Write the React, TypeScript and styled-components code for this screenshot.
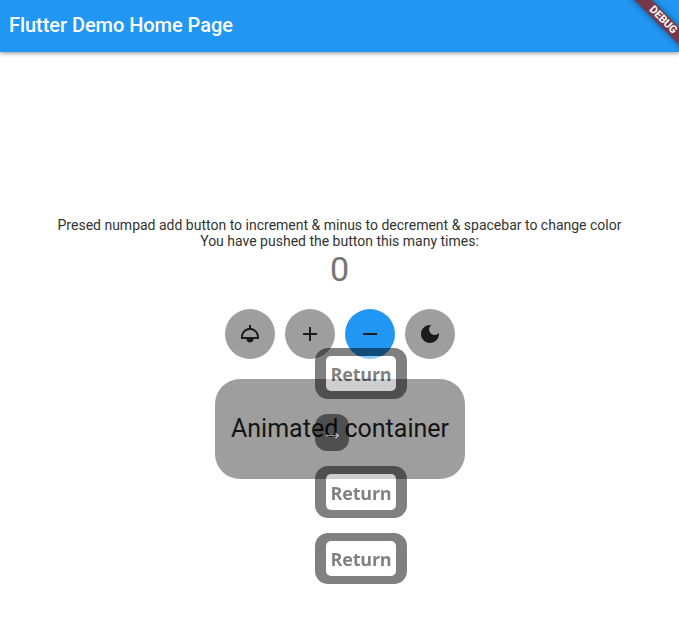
import React from 'react';
import styled, { createGlobalStyle } from 'styled-components';

const GlobalStyle = createGlobalStyle`
  * { box-sizing: border-box; }
  body { margin: 0; background: #fff; font-family: Roboto, sans-serif; overflow: hidden; }
`;

const Page = styled.div`
  position: relative;
  display: flex;
  flex-direction: column;
  width: 679px;
  height: 637px;
  overflow: hidden;
  background: #fff;
`;

const AppBar = styled.header`
  display: flex;
  align-items: center;
  flex: 0 0 52px;
  padding: 0 9px 3px;
  background: #2196f3;
  box-shadow: 0 1px 4px rgba(0, 0, 0, 0.35), 0 3px 4px rgba(0, 0, 0, 0.08);
`;

const Title = styled.h1`
  margin: 0;
  color: #fff;
  font-size: 20px;
  font-weight: 500;
  letter-spacing: -0.05px;
  line-height: 24px;
  white-space: nowrap;
`;

const DebugBanner = styled.div`
  position: absolute;
  left: 613px;
  top: 14px;
  width: 100px;
  height: 12px;
  transform: rotate(45deg);
  background: #773848;
  box-shadow: 0 0 6px rgba(0, 0, 0, 0.5);
  color: #fff;
  font-size: 10.8px;
  font-weight: 700;
  line-height: 12px;
  text-align: center;
`;

const Main = styled.main`
  display: flex;
  flex-direction: column;
  align-items: center;
  padding-top: 165px;
`;

const Message = styled.p`
  margin: 0;
  color: #333;
  font-size: 14px;
  line-height: 16px;
  text-align: center;
  white-space: nowrap;
`;

const Count = styled.div`
  height: 40px;
  margin-bottom: 19.5px;
  color: #757575;
  font-size: 34px;
  line-height: 40px;
`;

const ButtonRow = styled.div`
  display: flex;
  gap: 10px;
  margin: 0 0 20px 1px;
`;

const RoundButton = styled.button<{ $active?: boolean }>`
  display: flex;
  align-items: center;
  justify-content: center;
  width: 50px;
  height: 50px;
  padding: 0;
  border: 0;
  border-radius: 50%;
  background: ${(p) => (p.$active ? '#2196f3' : '#9e9e9e')};
  color: #1b1b1b;
`;

const AnimatedBox = styled.div`
  display: flex;
  align-items: center;
  justify-content: center;
  width: 250px;
  height: 100px;
  margin-left: 1px;
  padding-bottom: 1px;
  border-radius: 25px;
  background: #9e9e9e;
  color: #141414;
  font-size: 25px;
  white-space: nowrap;
`;

const KeyOverlay = styled.div`
  position: absolute;
  left: 315px;
  top: 348px;
  display: flex;
  flex-direction: column;
  align-items: flex-start;
  gap: 15px;
  opacity: 0.5;
`;

const KeyFrame = styled.div<{ $height: number }>`
  width: 92px;
  height: ${(p) => p.$height}px;
  padding: 8px 11px;
  border-radius: 13px;
  background: #000;
`;

const KeyFace = styled.div`
  display: flex;
  align-items: center;
  justify-content: center;
  width: 70px;
  height: 100%;
  padding-top: 1px;
  border-radius: 5px;
  background: #fff;
  color: #000;
  font: 700 18px/24px 'Open Sans', sans-serif;
  letter-spacing: -0.2px;
`;

const ArrowKey = styled.div`
  display: flex;
  align-items: center;
  justify-content: center;
  width: 34px;
  height: 37px;
  padding-top: 5px;
  border-radius: 12px;
  background: #000;
`;

const icon = { width: 24, height: 24, viewBox: '0 0 24 24', fill: 'currentColor' };

const LampIcon = () => (
  <svg {...icon}>
    <path d="M13 6.06V3h-2v3.06C6.5 6.56 3 10.38 3 15v2h5.4c0 1.99 1.61 3.6 3.6 3.6s3.6-1.61 3.6-3.6H21v-2c0-4.62-3.5-8.44-8-8.94zM12 15H5c0-3.86 3.14-7 7-7s7 3.14 7 7h-7z" />
  </svg>
);
const AddIcon = () => (
  <svg {...icon}>
    <path d="M19 13h-6v6h-2v-6H5v-2h6V5h2v6h6v2z" />
  </svg>
);
const RemoveIcon = () => (
  <svg {...icon}>
    <path d="M19 13H5v-2h14v2z" />
  </svg>
);
const MoonIcon = () => (
  <svg {...icon}>
    <path d="M12 3c-4.97 0-9 4.03-9 9s4.03 9 9 9 9-4.03 9-9c0-.46-.04-.92-.1-1.36-.98 1.37-2.58 2.26-4.4 2.26-2.98 0-5.4-2.42-5.4-5.4 0-1.81.89-3.42 2.26-4.4-.44-.06-.9-.1-1.36-.1z" />
  </svg>
);
const ArrowIcon = () => (
  <svg width="14" height="8" viewBox="0 0 14 8" fill="none" stroke="#fff">
    <path d="M1 4.5h12.5" strokeWidth="1.2" />
    <path d="M10.5 2l2.5 2.5-2.5 2.5" strokeWidth="1.4" />
  </svg>
);

const ReturnKey = ({ height = 51 }: { height?: number }) => (
  <KeyFrame $height={height}>
    <KeyFace>Return</KeyFace>
  </KeyFrame>
);

export default function App() {
  return (
    <Page>
      <GlobalStyle />
      <AppBar>
        <Title>Flutter Demo Home Page</Title>
      </AppBar>
      <DebugBanner>DEBUG</DebugBanner>
      <Main>
        <Message>
          Presed numpad add button to increment &amp; minus to decrement &amp; spacebar to change color
        </Message>
        <Message>You have pushed the button this many times:</Message>
        <Count>0</Count>
        <ButtonRow>
          <RoundButton aria-label="Lamp"><LampIcon /></RoundButton>
          <RoundButton aria-label="Increment"><AddIcon /></RoundButton>
          <RoundButton aria-label="Decrement" $active><RemoveIcon /></RoundButton>
          <RoundButton aria-label="Night mode"><MoonIcon /></RoundButton>
        </ButtonRow>
        <AnimatedBox>Animated container</AnimatedBox>
      </Main>
      <KeyOverlay>
        <ReturnKey />
        <ArrowKey><ArrowIcon /></ArrowKey>
        <ReturnKey height={52} />
        <ReturnKey />
      </KeyOverlay>
    </Page>
  );
}
